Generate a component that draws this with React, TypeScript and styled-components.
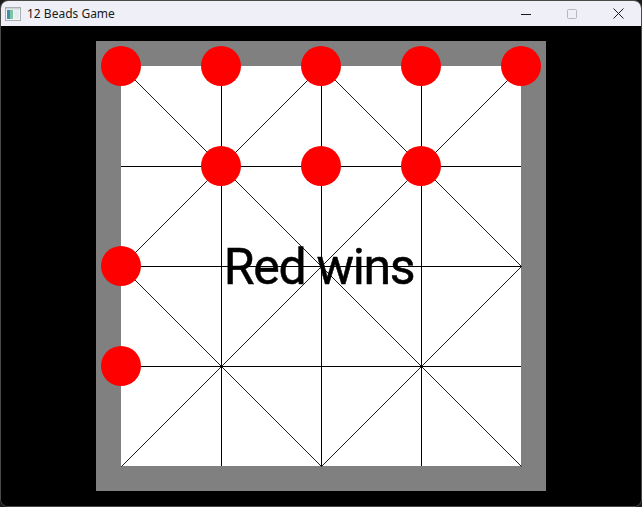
import React from "react";
import styled, { createGlobalStyle } from "styled-components";

const GlobalStyle = createGlobalStyle`
  html, body { margin: 0; padding: 0; background: #1c1c1c; }
  #root { width: 642px; height: 507px; }
`;

const Window = styled.div`
  box-sizing: border-box;
  width: 642px;
  height: 507px;
  border: 1px solid #4a4a4a;
  border-radius: 8px;
  overflow: hidden;
  display: flex;
  flex-direction: column;
  background: #000;
`;

const TitleBar = styled.div`
  height: 25px;
  flex: none;
  display: flex;
  align-items: center;
  background: #eff0f7;
  font-family: "Noto Sans", "Open Sans", sans-serif;
  font-size: 12px;
  color: #1a1a1a;
`;

const AppIcon = styled.svg`
  margin-left: 4px;
  margin-right: 6px;
  flex: none;
`;

const Title = styled.span`
  flex: 1;
  line-height: 25px;
  white-space: nowrap;
`;

const CaptionButton = styled.div`
  width: 46px;
  height: 25px;
  display: flex;
  align-items: center;
  justify-content: center;
`;

const Content = styled.div`
  flex: 1;
  display: flex;
  align-items: center;
  justify-content: center;
  background: #000;
`;

const BoardSvg = styled.svg`
  display: block;
  width: 450px;
  height: 450px;
`;

const N = 5;
const pt = (i: number) => 25 + 100 * i;

const beads: [number, number][] = [
  [0, 0], [1, 0], [2, 0], [3, 0], [4, 0],
  [1, 1], [2, 1], [3, 1],
  [0, 2],
  [0, 3],
];

const diagonals: [number, number, number, number][] = [
  [0, 0, 4, 4],
  [4, 0, 0, 4],
  [2, 0, 0, 2],
  [2, 0, 4, 2],
  [0, 2, 2, 4],
  [4, 2, 2, 4],
];

function Board() {
  const lines: React.ReactNode[] = [];
  for (let i = 1; i < N - 1; i++) {
    lines.push(
      <line key={"v" + i} x1={pt(i) + 0.5} y1={25} x2={pt(i) + 0.5} y2={425} stroke="#000" strokeWidth={1} shapeRendering="crispEdges" />
    );
    lines.push(
      <line key={"h" + i} x1={25} y1={pt(i) + 0.5} x2={425} y2={pt(i) + 0.5} stroke="#000" strokeWidth={1} shapeRendering="crispEdges" />
    );
  }
  diagonals.forEach(([a, b, c, d], k) => {
    lines.push(
      <line key={"d" + k} x1={pt(a) + 0.5} y1={pt(b) + 0.5} x2={pt(c) + 0.5} y2={pt(d) + 0.5} stroke="#000" strokeWidth={0.9} />
    );
  });
  return (
    <BoardSvg viewBox="0 0 450 450">
      <rect x={0} y={0} width={450} height={450} fill="#808080" />
      <rect x={25} y={25} width={400} height={400} fill="#fff" />
      {lines}
      {beads.map(([c, r], k) => (
        <circle key={k} cx={pt(c)} cy={pt(r)} r={20} fill="#ff0000" />
      ))}
      <text
        x={223}
        y={242.5}
        textAnchor="middle"
        fontFamily="Roboto, sans-serif"
        fontSize={50}
        letterSpacing={-1.3}
        stroke="#000"
        strokeWidth={0.5}
        fill="#000"
      >
        Red wins
      </text>
    </BoardSvg>
  );
}

export default function App() {
  return (
    <>
      <GlobalStyle />
      <Window>
        <TitleBar>
          <AppIcon width="16" height="14" viewBox="0 0 16 14">
            <rect x="0.5" y="0.5" width="15" height="13" fill="#f4f6f7" stroke="#a8b0b4" />
            <rect x="2" y="3" width="6" height="9" fill="#3f8fae" />
            <rect x="5" y="3" width="3" height="9" fill="#7cc4a4" />
            <rect x="9" y="3" width="5" height="9" fill="#e8ecee" />
            <rect x="1" y="1" width="14" height="1.5" fill="#c9d2d6" />
          </AppIcon>
          <Title>12 Beads Game</Title>
          <CaptionButton>
            <svg width="10" height="10" viewBox="0 0 10 10">
              <line x1="0" y1="5.5" x2="10" y2="5.5" stroke="#1a1a1a" strokeWidth="1" shapeRendering="crispEdges" />
            </svg>
          </CaptionButton>
          <CaptionButton>
            <svg width="10" height="10" viewBox="0 0 10 10">
              <rect x="0.5" y="0.5" width="9" height="9" rx="1" fill="none" stroke="#b8b8bc" strokeWidth="1" />
            </svg>
          </CaptionButton>
          <CaptionButton>
            <svg width="11" height="11" viewBox="0 0 11 11">
              <path d="M0.5 0.5 L10.5 10.5 M10.5 0.5 L0.5 10.5" stroke="#1a1a1a" strokeWidth="1" fill="none" />
            </svg>
          </CaptionButton>
        </TitleBar>
        <Content>
          <Board />
        </Content>
      </Window>
    </>
  );
}
